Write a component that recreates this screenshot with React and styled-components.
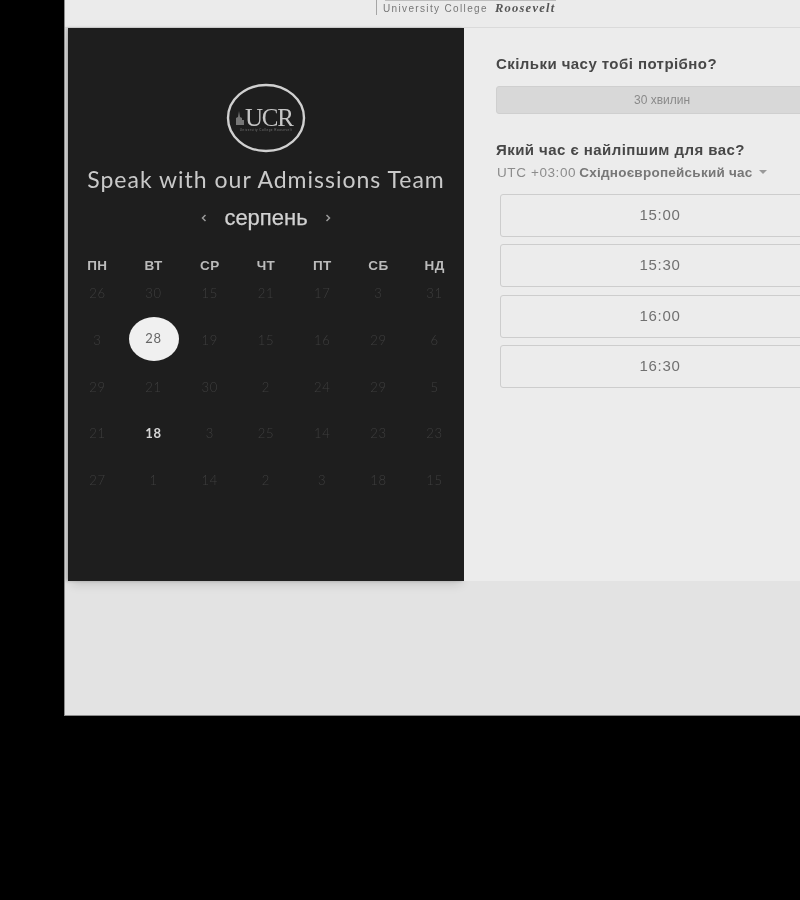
import styled, { createGlobalStyle } from 'styled-components';

const GlobalStyle = createGlobalStyle`
  html, body {
    margin: 0;
    padding: 0;
    background: #000;
    width: 800px;
    height: 900px;
    overflow: hidden;
    font-family: "Liberation Sans", Arial, sans-serif;
  }
`;

const Page = styled.div`
  box-sizing: border-box;
  width: 736px;
  height: 716px;
  margin-left: 64px;
  background: #e3e3e3;
  border-left: 1px solid #8c8c8c;
  border-bottom: 1px solid #8c8c8c;
  overflow: hidden;
  filter: blur(0.35px);
`;

const Header = styled.header`
  box-sizing: border-box;
  height: 28px;
  background: #ebebeb;
  border-bottom: 1px solid #dadada;
  padding-left: 311px;
`;

const Brand = styled.div`
  position: relative;
  box-sizing: border-box;
  display: flex;
  align-items: baseline;
  gap: 7px;
  width: 180px;
  height: 15px;
  padding-left: 6px;
  border-left: 1px solid #a5a5a5;
  color: #777;
  font-size: 10px;
  line-height: 17px;
  letter-spacing: 1.35px;
  white-space: nowrap;

  &::before {
    content: '';
    position: absolute;
    top: 0;
    left: 8px;
    right: 0;
    height: 1px;
    background: #bdbdbd;
  }
`;

const BrandName = styled.span`
  font-family: "Liberation Serif", serif;
  font-size: 12.5px;
  font-style: italic;
  font-weight: 700;
  color: #555;
  letter-spacing: 1.25px;
`;

const Card = styled.main`
  display: flex;
  width: 792px;
  height: 553px;
  margin-left: 3px;
`;

const LeftPanel = styled.section`
  box-sizing: border-box;
  flex: 0 0 396px;
  display: flex;
  flex-direction: column;
  align-items: center;
  padding: 55px 1px 0;
  background: #1e1e1e;
  color: #ddd;
  box-shadow: 0 6px 10px -3px rgba(0, 0, 0, 0.14), -2px 0 3px rgba(0, 0, 0, 0.2);
`;

const Logo = styled.svg`
  display: block;
  width: 80px;
  height: 70px;
`;

const Title = styled.h1`
  margin: 12px 0 0;
  font-family: Lato, sans-serif;
  font-size: 23px;
  line-height: 28px;
  font-weight: 400;
  letter-spacing: 1px;
  color: #c9c9c9;
  white-space: nowrap;
`;

const MonthNav = styled.div`
  display: flex;
  align-items: center;
  justify-content: center;
  gap: 16px;
  height: 24px;
  margin-top: 13px;
`;

const Month = styled.span`
  font-size: 22px;
  line-height: 24px;
  color: #d2d2d2;
  -webkit-text-stroke: 0.25px #d2d2d2;
`;

const Arrow = styled.svg`
  width: 8px;
  height: 10px;
  fill: none;
  stroke: #9a9a9a;
  stroke-width: 1.5;
`;

const Calendar = styled.div`
  display: flex;
  flex-direction: column;
  width: 393.4px;
  margin-top: 23px;
`;

const WeekHeader = styled.div`
  display: grid;
  grid-template-columns: repeat(7, 1fr);
  height: 24px;
  margin-bottom: 1px;
`;

const WeekDay = styled.div`
  display: flex;
  align-items: center;
  justify-content: center;
  font-size: 13.5px;
  font-weight: 700;
  letter-spacing: 0.3px;
  color: #bbb;
`;

const Weeks = styled.div`
  display: flex;
  flex-direction: column;
  gap: 16.8px;
`;

const WeekRow = styled.div`
  display: grid;
  grid-template-columns: repeat(7, 1fr);
  grid-template-rows: 30px;
`;

const Day = styled.div`
  display: flex;
  align-items: center;
  justify-content: center;
  font-family: Lato, sans-serif;
  font-size: 13px;
  letter-spacing: 0.7px;
  font-weight: ${({ $today }) => ($today ? 700 : 300)};
  color: ${({ $today }) => ($today ? '#d6d6d6' : '#3f3f3f')};
`;

const Selected = styled.span`
  display: flex;
  align-items: center;
  justify-content: center;
  flex: 0 0 50px;
  height: 44px;
  margin-top: -2px;
  padding-bottom: 1px;
  box-sizing: border-box;
  border-radius: 50%;
  background: #f0f0f0;
  color: #666;
  font-weight: 400;
`;

const RightPanel = styled.section`
  box-sizing: border-box;
  flex: 0 0 396px;
  padding: 27px 32px 0;
  background: #ececec;
`;

const Question = styled.h2`
  margin: 0;
  font-size: 15px;
  line-height: 18px;
  font-weight: 700;
  letter-spacing: 0.44px;
  color: #474747;
  white-space: nowrap;
`;

const Duration = styled.div`
  box-sizing: border-box;
  display: flex;
  align-items: center;
  justify-content: center;
  height: 28px;
  margin: 13px 0 27px;
  background: #d8d8d8;
  border: 1px solid #cfcfcf;
  border-radius: 3px;
  font-size: 12px;
  color: #8a8a8a;
`;

const Zone = styled.div`
  display: flex;
  align-items: center;
  gap: 3px;
  height: 18px;
  margin: 4px 0 13px 1px;
  font-size: 13.5px;
  letter-spacing: 0.6px;
  color: #8c8c8c;
  white-space: nowrap;
`;

const ZoneName = styled.b`
  color: #777;
  letter-spacing: 0.25px;
`;

const Caret = styled.span`
  width: 0;
  height: 0;
  margin-left: 3px;
  border-left: 4px solid transparent;
  border-right: 4px solid transparent;
  border-top: 4px solid #999;
`;

const Slots = styled.div`
  display: flex;
  flex-direction: column;
  gap: 7.4px;
  margin: 0 8px 0 4px;
`;

const Slot = styled.button`
  box-sizing: border-box;
  height: 43px;
  padding: 0 0 2px;
  background: #ececec;
  border: 1px solid #cdcdcd;
  border-radius: 3px;
  font-family: "Liberation Sans", Arial, sans-serif;
  font-size: 15px;
  letter-spacing: 0.7px;
  color: #707070;
`;

const weekDays = ['ПН', 'ВТ', 'СР', 'ЧТ', 'ПТ', 'СБ', 'НД'];

const weeks = [
  [26, 30, 15, 21, 17, 3, 31],
  [3, 28, 19, 15, 16, 29, 6],
  [29, 21, 30, 2, 24, 29, 5],
  [21, 18, 3, 25, 14, 23, 23],
  [27, 1, 14, 2, 3, 18, 15],
];

const slots = ['15:00', '15:30', '16:00', '16:30'];

const UcrLogo = () => (
  <Logo viewBox="0 0 80 70">
    <ellipse cx="40" cy="35" rx="38" ry="33" fill="none" stroke="#d0d0d0" strokeWidth="2.4" />
    <path d="M10 42V35l2-1 1-6 1 6 2 1v7z M16 42v-5h2v5z" fill="#777" />
    <text x="19" y="42.5" fontFamily="Liberation Serif, serif" fontSize="25" letterSpacing="-1.3" fill="#c6c6c6">
      UCR
    </text>
    <text x="40" y="47.5" textAnchor="middle" fontFamily="Liberation Sans, sans-serif" fontSize="3" letterSpacing="0.5" fill="#777">
      University College Roosevelt
    </text>
  </Logo>
);

const App = () => (
  <>
    <GlobalStyle />
    <Page>
      <Header>
        <Brand>
          University College <BrandName>Roosevelt</BrandName>
        </Brand>
      </Header>
      <Card>
        <LeftPanel>
          <UcrLogo />
          <Title>Speak with our Admissions Team</Title>
          <MonthNav>
            <Arrow viewBox="0 0 8 10">
              <path d="M5.5 2L2.5 5l3 3" />
            </Arrow>
            <Month>серпень</Month>
            <Arrow viewBox="0 0 8 10">
              <path d="M2.5 2l3 3-3 3" />
            </Arrow>
          </MonthNav>
          <Calendar>
            <WeekHeader>
              {weekDays.map(day => (
                <WeekDay key={day}>{day}</WeekDay>
              ))}
            </WeekHeader>
            <Weeks>
              {weeks.map((week, row) => (
                <WeekRow key={row}>
                  {week.map((day, col) => {
                    const isSelected = row === 1 && col === 1;
                    const isToday = row === 3 && col === 1;
                    return (
                      <Day key={col} $today={isToday}>
                        {isSelected ? <Selected>{day}</Selected> : day}
                      </Day>
                    );
                  })}
                </WeekRow>
              ))}
            </Weeks>
          </Calendar>
        </LeftPanel>
        <RightPanel>
          <Question>Скільки часу тобі потрібно?</Question>
          <Duration>30 хвилин</Duration>
          <Question>Який час є найліпшим для вас?</Question>
          <Zone>
            UTC +03:00 <ZoneName>Східноєвропейський час</ZoneName>
            <Caret />
          </Zone>
          <Slots>
            {slots.map(time => (
              <Slot key={time}>{time}</Slot>
            ))}
          </Slots>
        </RightPanel>
      </Card>
    </Page>
  </>
);

export default App;
